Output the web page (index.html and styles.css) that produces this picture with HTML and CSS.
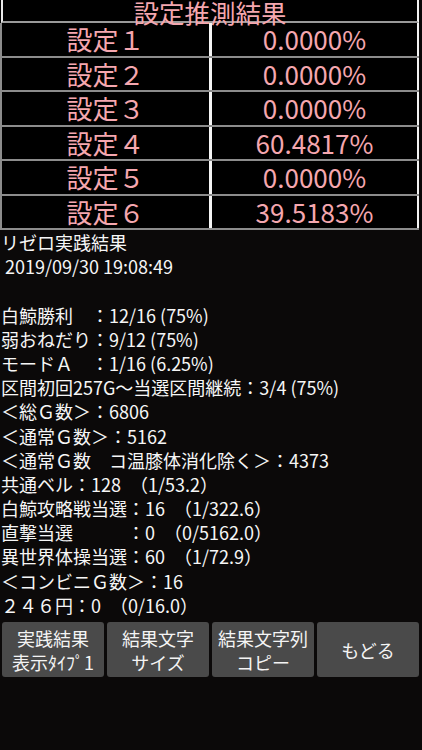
FILE: index.html
```html
<!DOCTYPE html>
<html lang="ja">
<head>
<meta charset="utf-8">
<title>設定推測結果</title>
<link rel="stylesheet" href="styles.css">
</head>
<body>
<div class="page">
  <div class="table">
    <div class="head"><span class="head-text">設定推測結果</span></div>
    <div class="row"><div class="cell left">設定１</div><div class="cell right">0.0000%</div></div>
    <div class="row"><div class="cell left">設定２</div><div class="cell right">0.0000%</div></div>
    <div class="row"><div class="cell left">設定３</div><div class="cell right">0.0000%</div></div>
    <div class="row"><div class="cell left">設定４</div><div class="cell right">60.4817%</div></div>
    <div class="row"><div class="cell left">設定５</div><div class="cell right">0.0000%</div></div>
    <div class="row"><div class="cell left">設定６</div><div class="cell right">39.5183%</div></div>
  </div>
  <div class="result">
    <div class="line">リゼロ実践結果</div>
    <div class="line"> 2019/09/30 19:08:49</div>
    <div class="line"> </div>
    <div class="line">白鯨勝利　：12/16 (75%)</div>
    <div class="line">弱おねだり：9/12 (75%)</div>
    <div class="line">モードＡ　：1/16 (6.25%)</div>
    <div class="line">区間初回257G〜当選区間継続：3/4 (75%)</div>
    <div class="line">＜総Ｇ数＞：6806</div>
    <div class="line">＜通常Ｇ数＞：5162</div>
    <div class="line">＜通常Ｇ数　コ温膝体消化除く＞：4373</div>
    <div class="line">共通ベル：128　（1/53.2）</div>
    <div class="line">白鯨攻略戦当選：16　（1/322.6）</div>
    <div class="line">直撃当選　　　：0　（0/5162.0）</div>
    <div class="line">異世界体操当選：60　（1/72.9）</div>
    <div class="line">＜コンビニＧ数＞：16</div>
    <div class="line">２４６円：0　（0/16.0）</div>
  </div>
  <div class="buttons">
    <div class="btn"><span>実践結果</span><span>表示ﾀｲﾌﾟ1</span></div>
    <div class="btn"><span>結果文字</span><span>サイズ</span></div>
    <div class="btn"><span>結果文字列</span><span>コピー</span></div>
    <div class="btn"><span>もどる</span></div>
  </div>
</div>
</body>
</html>
```
FILE: styles.css
```css
html, body {
  margin: 0;
  padding: 0;
  background: #0b0909;
}
.page {
  width: 422px;
  height: 750px;
  background: #0b0909;
  font-family: "Noto Sans CJK JP", "Noto Sans", sans-serif;
  overflow: hidden;
}
.table {
  width: 419px;
  background: #000;
}
.head {
  margin-left: 1px;
  height: 21px;
  border-left: 2px solid #e8e8e8;
  border-right: 2px solid #f4f4f4;
  border-bottom: 2px solid #9a9a9a;
  display: flex;
  justify-content: center;
  align-items: center;
}
.head-text {
  color: #f5a7af;
  font-size: 25.5px;
  line-height: 24px;
  margin-top: 2px;
  white-space: nowrap;
}
.row {
  display: flex;
  height: 32.5px;
  border-bottom: 2px solid #8c8c8c;
}
.cell {
  color: #f5a7af;
  font-size: 26px;
  line-height: 32.5px;
  text-align: center;
  white-space: nowrap;
}
.left {
  width: 207px;
  border-left: 2px solid #8c8c8c;
  border-right: 3px solid #f4f4f4;
}
.right {
  flex: 1;
  border-right: 2px solid #f4f4f4;
}
.result {
  padding-left: 1px;
  color: #f6f6f6;
  font-size: 18px;
  line-height: 24.2px;
}
.line {
  white-space: pre;
  height: 24.2px;
}
.buttons {
  display: flex;
  gap: 3px;
  padding-left: 2px;
  margin-top: 5px;
}
.btn {
  width: 102px;
  height: 55px;
  background: #4a4a4a;
  border-radius: 3px;
  color: #f4f4f4;
  font-size: 18px;
  line-height: 24px;
  display: flex;
  flex-direction: column;
  align-items: center;
  justify-content: center;
}
```
